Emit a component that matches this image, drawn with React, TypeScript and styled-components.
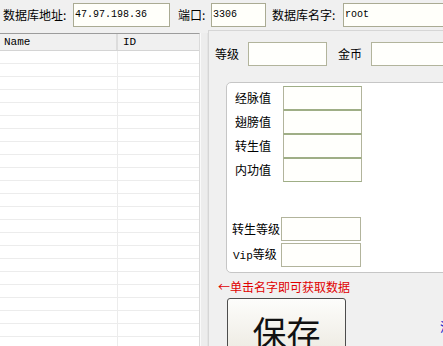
import styled, { createGlobalStyle } from "styled-components";

const GlobalStyle = createGlobalStyle`
    html, body {
        margin: 0;
        padding: 0;
        background: #f0f0f0;
        overflow: hidden;
    }
    * {
        box-sizing: border-box;
    }
`;

const Window = styled.div({
    width: 443,
    height: 346,
    overflow: 'hidden',
    background: '#f0f0f0',
    fontFamily: '"Noto Sans CJK SC", "DejaVu Sans", sans-serif',
    fontSize: 12,
    color: '#000',
});

const TopBar = styled.div({
    display: 'flex',
    alignItems: 'flex-start',
    height: 30,
    paddingTop: 3,
    paddingLeft: 3,
    whiteSpace: 'nowrap',
});

const Label = styled.span<{ $width: number; $gap?: number }>(({ $width, $gap }) => ({
    display: 'inline-block',
    width: $width,
    marginLeft: $gap || 0,
    lineHeight: '24px',
    flexShrink: 0,
}));

const TextBox = styled.div<{ $width: number }>(({ $width }) => ({
    width: $width,
    height: 24,
    flexShrink: 0,
    border: '1px solid #aaab93',
    background: '#fffffa',
    fontFamily: '"Liberation Mono", monospace',
    fontSize: 10,
    lineHeight: '22px',
    paddingLeft: 1,
}));

const Body = styled.div({
    display: 'flex',
    height: 316,
});

const ListPane = styled.div({
    width: 208,
    flexShrink: 0,
    paddingTop: 3,
    display: 'flex',
});

const List = styled.div({
    width: 200,
    height: '100%',
    background: '#fff',
    borderTop: '1px solid #9c9c9c',
    borderRight: '1px solid #dadada',
});

const ScrollTrack = styled.div({
    width: 8,
    height: '100%',
    borderLeft: '1px solid #fafafa',
    borderRight: '1px solid #e4e4e4',
    background: '#ededed',
});

const HeaderRow = styled.div({
    display: 'grid',
    gridTemplateColumns: '118px 1fr',
    height: 17,
    background: '#f0f0f0',
    borderBottom: '1px solid #d4d4d4',
    fontFamily: '"Liberation Mono", monospace',
    fontSize: 11,
    lineHeight: '16px',
});

const HeaderCell = styled.div<{ $last?: boolean }>(({ $last }) => ({
    paddingLeft: $last ? 5 : 4,
    borderRight: $last ? 'none' : '2px solid #dcdcdc',
}));

const Row = styled.div({
    display: 'grid',
    gridTemplateColumns: '118px 1fr',
    height: 13,
    borderBottom: '1px solid #ececec',
});

const Cell = styled.div({
    borderRight: '1px solid #ececec',
});

const RightPane = styled.div({
    flex: 1,
    minWidth: 0,
    borderLeft: '1px solid #d6d6d6',
    borderTop: '1px solid #d6d6d6',
    paddingLeft: 6,
    paddingTop: 11,
    whiteSpace: 'nowrap',
});

const FieldRow = styled.div({
    display: 'flex',
    alignItems: 'flex-start',
});

const GroupBox = styled.div({
    marginTop: 16,
    marginLeft: 11,
    width: 260,
    height: 191,
    background: '#fff',
    border: '1px solid #c6c6c6',
    borderRadius: 5,
    paddingTop: 3,
    paddingLeft: 8,
});

const StatRow = styled.div({
    display: 'flex',
    alignItems: 'center',
});

const StatBox = styled.div<{ $width: number; $plain?: boolean }>(({ $width, $plain }) => ({
    width: $width,
    height: 24,
    flexShrink: 0,
    border: '1px solid #b2b49c',
    borderTopColor: $plain ? '#b2b49c' : '#9fae86',
    borderBottomColor: $plain ? '#b2b49c' : '#9fae86',
    background: '#fffffc',
}));

const LowerStats = styled.div({
    marginTop: 35,
    marginLeft: -3,
    display: 'flex',
    flexDirection: 'column',
    gap: 1,
});

const VipText = styled.span({
    paddingLeft: 1,
    fontFamily: '"Liberation Mono", monospace',
    fontSize: 11,
});

const Hint = styled.div({
    marginTop: 7,
    marginLeft: 3,
    color: '#e00000',
    lineHeight: '14px',
});

const ActionRow = styled.div({
    display: 'flex',
    alignItems: 'flex-start',
    marginTop: 4,
});

const SaveButton = styled.button({
    marginLeft: 12,
    width: 119,
    height: 60,
    flexShrink: 0,
    border: '1px solid #4d4d4d',
    borderRadius: 3,
    background: 'linear-gradient(#fdfdfb, #ece9e0)',
    fontFamily: '"Noto Sans CJK SC", sans-serif',
    fontSize: 34,
    lineHeight: '34px',
    color: '#111',
    padding: '8px 0 0',
    textAlign: 'center',
    verticalAlign: 'top',
});

const LinkText = styled.span({
    marginLeft: 94,
    marginTop: 22,
    color: '#1010c8',
    lineHeight: '14px',
});

const stats = ['经脉值', '翅膀值', '转生值', '内功值'];

export default function App() {
    const rows = Array.from({ length: 23 });
    return <>
        <GlobalStyle />
        <Window>
            <TopBar>
                <Label $width={70}>数据库地址:</Label>
                <TextBox $width={97}>47.97.198.36</TextBox>
                <Label $width={33} $gap={8}>端口:</Label>
                <TextBox $width={55}>3306</TextBox>
                <Label $width={71} $gap={6}>数据库名字:</Label>
                <TextBox $width={120}>root</TextBox>
            </TopBar>
            <Body>
                <ListPane>
                    <List>
                        <HeaderRow>
                            <HeaderCell>Name</HeaderCell>
                            <HeaderCell $last>ID</HeaderCell>
                        </HeaderRow>
                        {rows.map((_, i) => <Row key={i}><Cell /><div /></Row>)}
                    </List>
                    <ScrollTrack />
                </ListPane>
                <RightPane>
                    <FieldRow>
                        <Label $width={33}>等级</Label>
                        <StatBox $width={79} $plain />
                        <Label $width={33} $gap={11}>金币</Label>
                        <StatBox $width={100} $plain />
                    </FieldRow>
                    <GroupBox>
                        {stats.map(s => (
                            <StatRow key={s}>
                                <Label $width={48}>{s}</Label>
                                <StatBox $width={79} />
                            </StatRow>
                        ))}
                        <LowerStats>
                            <StatRow>
                                <Label $width={49}>转生等级</Label>
                                <StatBox $width={80} $plain />
                            </StatRow>
                            <StatRow>
                                <Label $width={49}><VipText>Vip</VipText>等级</Label>
                                <StatBox $width={80} $plain />
                            </StatRow>
                        </LowerStats>
                    </GroupBox>
                    <Hint>←单击名字即可获取数据</Hint>
                    <ActionRow>
                        <SaveButton>保存</SaveButton>
                        <LinkText>注册</LinkText>
                    </ActionRow>
                </RightPane>
            </Body>
        </Window>
    </>;
}
